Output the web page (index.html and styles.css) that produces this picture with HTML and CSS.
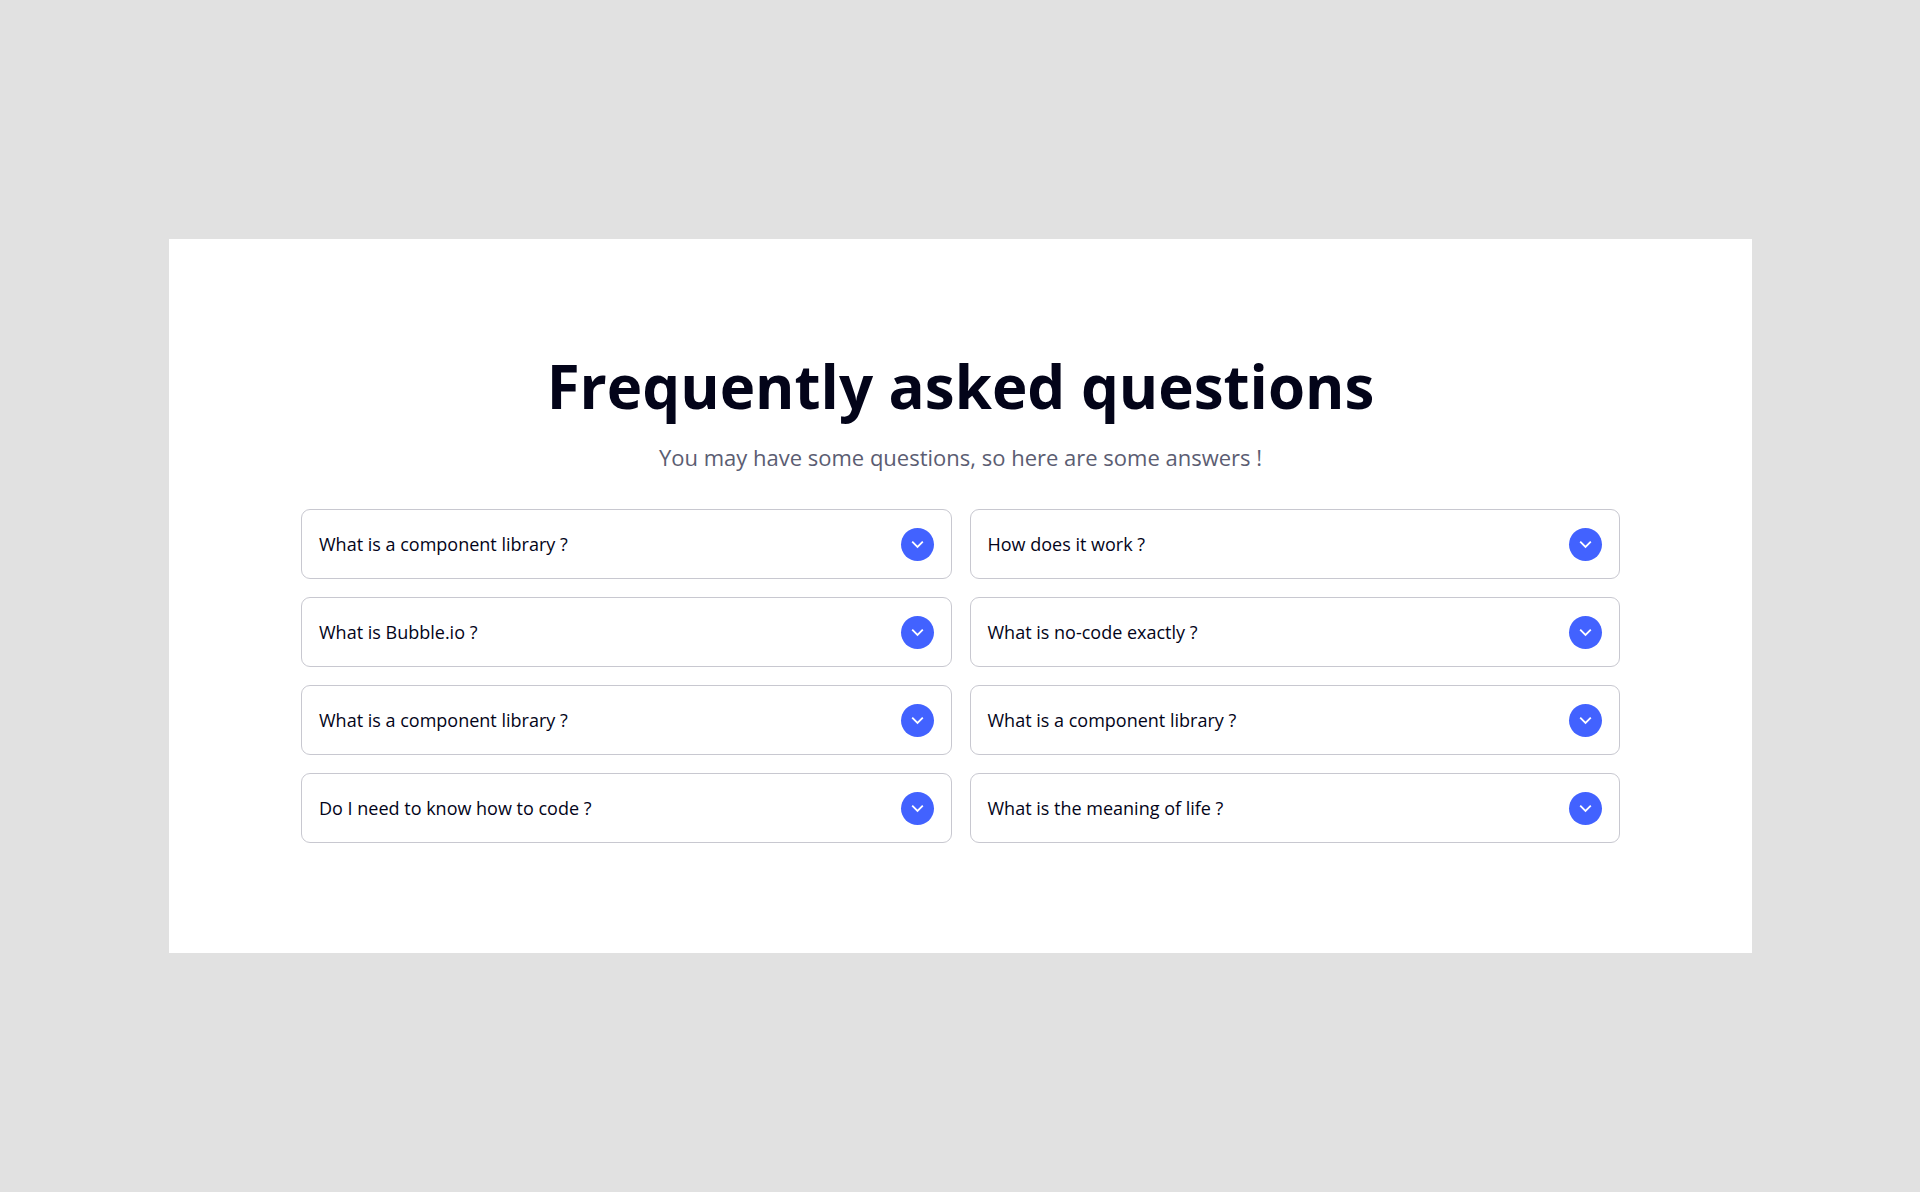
FILE: index.html
```
<!DOCTYPE html>
<html lang="en">
<head>
  <meta charset="UTF-8" />
  <meta name="viewport" content="width=device-width, initial-scale=1.0" />
  <title>Frequently asked questions</title>
  <link rel="stylesheet" href="styles.css">
</head>
<body>
  <svg class="sprite" aria-hidden="true">
    <symbol id="chevron" viewBox="0 0 33 33">
      <path d="M11.2 13.6 L16.5 18.9 L21.8 13.6" fill="none" stroke="currentColor" stroke-width="1.8" />
    </symbol>
  </svg>

  <section class="faq">
    <h1 class="faq-title">Frequently asked questions</h1>
    <p class="faq-subtitle">You may have some questions, so here are some answers !</p>

    <div class="faq-grid">
      <button type="button" class="faq-item">What is a component library ?
        <svg class="toggle" aria-hidden="true"><use href="#chevron" /></svg>
      </button>
      <button type="button" class="faq-item">How does it work ?
        <svg class="toggle" aria-hidden="true"><use href="#chevron" /></svg>
      </button>
      <button type="button" class="faq-item">What is Bubble.io ?
        <svg class="toggle" aria-hidden="true"><use href="#chevron" /></svg>
      </button>
      <button type="button" class="faq-item">What is no-code exactly ?
        <svg class="toggle" aria-hidden="true"><use href="#chevron" /></svg>
      </button>
      <button type="button" class="faq-item">What is a component library ?
        <svg class="toggle" aria-hidden="true"><use href="#chevron" /></svg>
      </button>
      <button type="button" class="faq-item">What is a component library ?
        <svg class="toggle" aria-hidden="true"><use href="#chevron" /></svg>
      </button>
      <button type="button" class="faq-item">Do I need to know how to code ?
        <svg class="toggle" aria-hidden="true"><use href="#chevron" /></svg>
      </button>
      <button type="button" class="faq-item">What is the meaning of life ?
        <svg class="toggle" aria-hidden="true"><use href="#chevron" /></svg>
      </button>
    </div>
  </section>
</body>
</html>
```

FILE: styles.css
```
* {
  box-sizing: border-box;
}
body {
  margin: 0;
  min-height: 100vh;
  padding: 0 168px 0 169px;
  display: flex;
  align-items: center;
  background-color: #e1e1e1;
  color: #030419;
  font-family: "Open Sans", sans-serif;
}
.sprite {
  display: none;
}
.faq {
  flex: 1;
  padding: 110px 132px;
  background-color: #fff;
  text-align: center;
}
.faq-title {
  margin: 0 0 18px;
  font-size: 60px;
  font-weight: 700;
  line-height: 74px;
}
.faq-subtitle {
  margin: 0 0 36px;
  color: #5b5d72;
  font-size: 22px;
  line-height: 32px;
}
.faq-grid {
  display: grid;
  grid-template-columns: 1fr 1fr;
  gap: 18px;
}
.faq-item {
  display: flex;
  align-items: center;
  justify-content: space-between;
  height: 70px;
  padding: 0 17px;
  border: 1px solid #c8c8d0;
  border-radius: 9px;
  background-color: #fff;
  color: inherit;
  font-family: inherit;
  font-size: 18px;
  text-align: left;
  cursor: pointer;
}
.toggle {
  flex: none;
  width: 33px;
  height: 33px;
  border-radius: 50%;
  background-color: #4262ff;
  color: #fff;
}
```
